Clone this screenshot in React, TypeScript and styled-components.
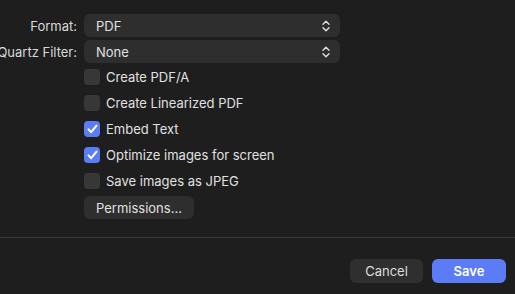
import React from "react";
import styled, { createGlobalStyle } from "styled-components";

const GlobalStyle = createGlobalStyle`
    html, body {
        margin: 0;
        padding: 0;
        background: #1e1e1e;
        overflow: hidden;
    }
    * {
        box-sizing: border-box;
    }
`;

type Option = { label: string; checked: boolean };

const options: Option[] = [
    { label: "Create PDF/A", checked: false },
    { label: "Create Linearized PDF", checked: false },
    { label: "Embed Text", checked: true },
    { label: "Optimize images for screen", checked: true },
    { label: "Save images as JPEG", checked: false },
];

const Chevrons = () => (
    <svg width="8" height="12" viewBox="0 0 8 12" fill="none">
        <path d="M1 4.2 L4 1.2 L7 4.2" stroke="#e2e2e2" strokeWidth="1.4" strokeLinecap="round" strokeLinejoin="round" />
        <path d="M1 7.8 L4 10.8 L7 7.8" stroke="#e2e2e2" strokeWidth="1.4" strokeLinecap="round" strokeLinejoin="round" />
    </svg>
);

const Check = () => (
    <svg width="11" height="10" viewBox="0 0 11 10" fill="none">
        <path d="M1.5 5.4 L4.2 8.2 L9.5 1.6" stroke="#fff" strokeWidth="2" strokeLinecap="round" strokeLinejoin="round" />
    </svg>
);

const Popup: React.FC<{ value: string }> = ({ value }) => (
    <PopupButton>
        <span>{value}</span>
        <Chevrons />
    </PopupButton>
);

export default function App() {
    return (
        <Page>
            <GlobalStyle />
            <Form>
                <Label>Format:</Label>
                <Popup value="PDF" />
                <Label>Quartz Filter:</Label>
                <Popup value="None" />
                <Options>
                    {options.map((o) => (
                        <OptionRow key={o.label}>
                            <Box $checked={o.checked}>{o.checked && <Check />}</Box>
                            {o.label}
                        </OptionRow>
                    ))}
                    <PermissionsBtn>Permissions…</PermissionsBtn>
                </Options>
            </Form>
            <Divider />
            <Footer>
                <Button $width={73}>Cancel</Button>
                <Button $width={74} $primary>
                    Save
                </Button>
            </Footer>
        </Page>
    );
}

const Page = styled.div`
    width: 515px;
    height: 294px;
    display: flex;
    flex-direction: column;
    padding-top: 14px;

    background: #1e1e1e;
    color: #dedede;
    font-family: "Inter", "Liberation Sans", sans-serif;
    font-size: 13px;
`;

const Form = styled.div`
    display: grid;
    grid-template-columns: 77px 256px;
    column-gap: 7px;
    row-gap: 3px;
    align-items: center;
`;

const Label = styled.div`
    justify-self: end;
    white-space: nowrap;
    color: #d9d9d9;
`;

const PopupButton = styled.div`
    height: 23px;
    display: flex;
    align-items: center;
    justify-content: space-between;
    padding: 0 10px 0 12px;

    border-radius: 6px;
    background: #2e2e2e;
    color: #e0e0e0;
`;

const Options = styled.div`
    grid-column: 2;
    display: flex;
    flex-direction: column;
    align-items: flex-start;
    margin-top: -2px;
`;

const OptionRow = styled.div`
    height: 26px;
    display: flex;
    align-items: center;
    gap: 6px;
    color: #e0e0e0;
`;

const Box = styled.div<{ $checked: boolean }>`
    width: 16px;
    height: 16px;
    display: flex;
    align-items: center;
    justify-content: center;

    border-radius: 4px;
    background: ${(p) => (p.$checked ? "#5b7cf5" : "#373737")};
`;

const PermissionsBtn = styled.div`
    height: 23px;
    display: flex;
    align-items: center;
    margin-top: 2px;
    padding: 0 12px;

    border-radius: 6px;
    background: #2e2e2e;
    color: #e0e0e0;
`;

const Divider = styled.div`
    height: 1px;
    margin-top: 18px;
    background: #383838;
`;

const Footer = styled.div`
    display: flex;
    justify-content: flex-end;
    gap: 9px;
    padding: 21px 9px 0 0;
`;

const Button = styled.div<{ $width: number; $primary?: boolean }>`
    width: ${(p) => p.$width}px;
    height: 24px;
    display: flex;
    align-items: center;
    justify-content: center;

    border-radius: 6px;
    background: ${(p) => (p.$primary ? "#5b7cf6" : "#2f2f2f")};
    color: ${(p) => (p.$primary ? "#ffffff" : "#dedede")};
    font-weight: ${(p) => (p.$primary ? 600 : 400)};
`;
